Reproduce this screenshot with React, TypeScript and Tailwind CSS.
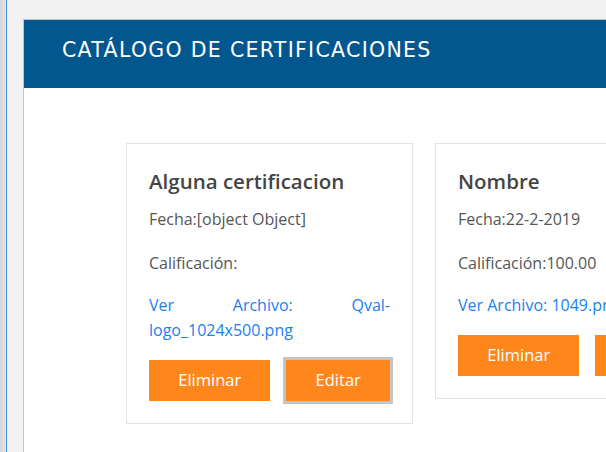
import React from "react";

const body = { fontFamily: '"Open Sans", "Noto Sans", sans-serif' };
const head = { fontFamily: '"DejaVu Sans", "Noto Sans", sans-serif' };

function Card({
  title,
  fecha,
  calif,
  archivo,
  focused,
}: {
  title: string;
  fecha: string;
  calif: string;
  archivo: string;
  focused?: boolean;
}) {
  return (
    <div className="w-[287px] shrink-0 border border-[#e3e3e3] bg-white px-[22px] pt-[23px] pb-[22px]" style={body}>
      <h2 className="text-[20.5px] leading-[28px] font-semibold text-[#444444]">{title}</h2>
      <p className="mt-[12px] text-[16px] leading-[24px] text-[#555555]">Fecha:{fecha}</p>
      <p className="mt-[20px] text-[16px] leading-[24px] text-[#555555]">Calificación:{calif}</p>
      <p className="mt-[18px] text-[16px] leading-[25px] text-[#1a7ff0] text-justify whitespace-nowrap">
        {archivo.length > 20 ? (
          <>
            <span className="flex justify-between">
              <span>Ver</span>
              <span>Archivo:</span>
              <span>Qval-</span>
            </span>
            <span className="block">logo_1024x500.png</span>
          </>
        ) : (
          <>Ver Archivo: {archivo}</>
        )}
      </p>
      <div className="mt-[17px] flex gap-[16px]">
        <button className="w-[122px] h-[41px] bg-[#ff861b] text-white text-[16.5px]">Eliminar</button>
        <button
          className={
            "w-[104px] h-[41px] bg-[#ff861b] text-white text-[16.5px] " +
            (focused ? "outline outline-[3px] outline-[#c2c4c7]" : "")
          }
        >
          Editar
        </button>
      </div>
    </div>
  );
}

export default function App() {
  return (
    <div className="w-[606px] h-[452px] overflow-hidden bg-[#f2f2f2] flex">
      <div className="w-[6px] shrink-0 bg-gradient-to-r from-[#d6d6d6] to-[#e6e6e6]" />
      <div className="w-[1px] shrink-0 bg-[#3b8fe0]" />
      <div className="w-[16px] shrink-0" />
      <div className="flex-1 mt-[19px] border-l border-t border-[#c4c4c4] bg-white flex flex-col min-w-0">
        <div className="h-[68px] shrink-0 bg-[#03578f] flex items-center pl-[38px] pb-[8px]">
          <h1 className="text-white text-[20.5px] tracking-[1.3px] font-normal" style={head}>
            CATÁLOGO DE CERTIFICACIONES
          </h1>
        </div>
        <div className="flex items-start gap-[22px] pl-[102px] pt-[55px]">
          <Card
            title="Alguna certificacion"
            fecha="[object Object]"
            calif=""
            archivo="Qval-logo_1024x500.png"
            focused
          />
          <Card title="Nombre" fecha="22-2-2019" calif="100.00" archivo="1049.png" />
        </div>
      </div>
    </div>
  );
}
